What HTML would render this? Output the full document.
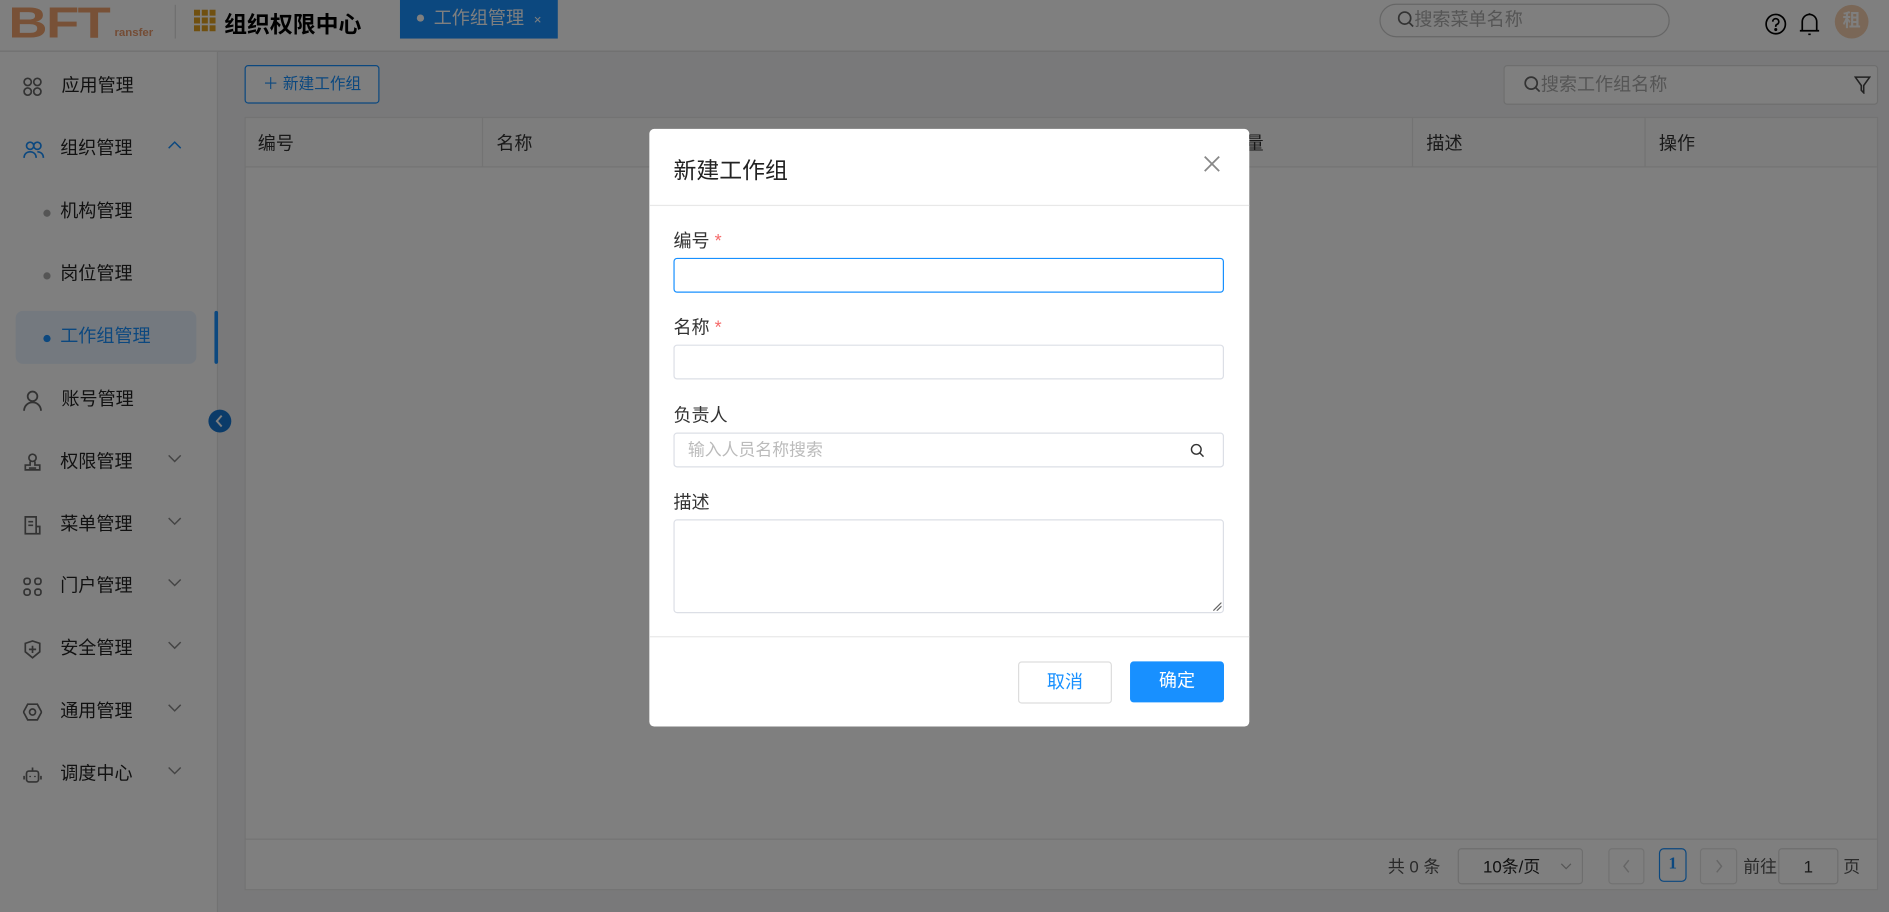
<!DOCTYPE html>
<html><head><meta charset="utf-8"><style>
*{box-sizing:border-box;margin:0;padding:0}
html,body{width:1889px;height:912px;overflow:hidden;background:#f2f3f5}
body{font-family:"Liberation Sans","Noto Sans CJK SC",sans-serif;color:#333}
#w{position:absolute;left:0;top:0;width:1568px;height:757px;transform:scale(1.20472,1.2048);transform-origin:0 0;background:#f2f3f5}
.a{position:absolute}
.hdr{left:0;top:0;width:1568px;height:43px;background:#fff;border-bottom:1px solid #ddd}
.side{left:0;top:43px;width:181px;height:714px;background:#fff;border-right:1px solid #e4e4e4}
.it{position:absolute;left:0;width:181px;height:20px;font-size:15px;color:#222;line-height:20px}
.it .t{position:absolute;left:50px;top:0}
.it .ic{position:absolute;left:19px;top:2px}
.it .ch{position:absolute;left:139px;top:3px}
.dot{position:absolute;left:36px;top:8px;width:6px;height:6px;border-radius:3px;background:#aaa}
.mask{left:0;top:0;width:1568px;height:757px;background:rgba(0,0,0,.5)}
.modal{left:539px;top:107px;width:498px;height:496px;background:#fff;border-radius:4px}
.lbl{position:absolute;left:20px;font-size:15px;color:#333}
.inp{position:absolute;left:20px;width:457px;height:29px;border:1px solid #dcdfe6;border-radius:3px}
.th{position:absolute;top:108px;font-size:15px;color:#333}
</style></head><body><div id="w">
<div class="a hdr">
 <div class="a" style="left:7px;top:1px;font:900 36px/36px 'Liberation Sans',sans-serif;color:#f0a36e;transform:scaleX(1.25);transform-origin:0 0;letter-spacing:-1px">BFT</div>
 <div class="a" style="left:95px;top:22px;font:bold 9.5px 'Liberation Sans',sans-serif;color:#e8986a">ransfer</div>
 <div class="a" style="left:145px;top:4px;width:1px;height:28px;background:#ddd"></div>
 <svg class="a" style="left:161px;top:8px" width="18" height="18" viewBox="0 0 18 18" fill="#e0a020"><rect x="0" y="0" width="5" height="5"/><rect x="6.5" y="0" width="5" height="5"/><rect x="13" y="0" width="5" height="5"/><rect x="0" y="6.5" width="5" height="5"/><rect x="6.5" y="6.5" width="5" height="5"/><rect x="13" y="6.5" width="5" height="5"/><rect x="0" y="13" width="5" height="5"/><rect x="6.5" y="13" width="5" height="5"/><rect x="13" y="13" width="5" height="5"/></svg>
 <div class="a" style="left:186px;top:6px;font-size:19px;font-weight:bold;color:#000">组织权限中心</div>
 <div class="a" style="left:332px;top:0;width:131px;height:32px;background:#1890ff;color:#fff;font-size:15px;line-height:31px"><span style="display:inline-block;width:6px;height:6px;border-radius:3px;background:#fff;margin:0 8px 2px 14px"></span>工作组管理<span style="font-size:11px;margin-left:8px">×</span></div>
 <div class="a" style="left:1145px;top:3px;width:241px;height:28px;border:1px solid #ccc;border-radius:14px;font-size:15px;color:#aaa;line-height:26px;padding-left:14px"><svg width="14" height="14" viewBox="0 0 14 14" style="vertical-align:-2px" fill="none" stroke="#666" stroke-width="1.4"><circle cx="6" cy="6" r="5"/><path d="M9.6 9.6L13 13"/></svg>搜索菜单名称</div>
 <svg class="a" style="left:1464px;top:10px" width="20" height="20" viewBox="0 0 20 20" fill="none" stroke="#000" stroke-width="1.4"><circle cx="10" cy="10" r="8"/><path d="M7.5 8a2.5 2.5 0 1 1 3.5 2.3c-.7.3-1 .8-1 1.5v.5"/><circle cx="10" cy="14.5" r=".6" fill="#000"/></svg>
 <svg class="a" style="left:1493px;top:9px" width="18" height="22" viewBox="0 0 18 22" fill="none" stroke="#000" stroke-width="1.4"><path d="M3 16V9a6 6 0 0 1 12 0v7M1 16.5h16M9 2V3M8 19.5h2"/></svg>
 <div class="a" style="left:1523px;top:4px;width:28px;height:28px;border-radius:14px;background:#f4cfae;color:#fff;font-size:15px;font-weight:bold;text-align:center;line-height:28px">租</div>
</div>
<div class="a side">
 <div class="it" style="top:19px"><svg class="ic" width="16" height="16" fill="none" stroke="#666" stroke-width="1.4"><circle cx="4" cy="4" r="3"/><circle cx="12" cy="4" r="3"/><circle cx="4" cy="12" r="3"/><circle cx="12" cy="12" r="3"/></svg><span class="t" style="left:51px">应用管理</span></div>
 <div class="it" style="top:71px"><svg class="ic" width="18" height="16" fill="none" stroke="#1890ff" stroke-width="1.4"><circle cx="6" cy="5" r="3"/><circle cx="12" cy="5" r="3"/><path d="M1 15c0-3 2-5 5-5s5 2 5 5M12 10c3 0 5 2 5 5"/></svg><span class="t">组织管理</span><svg class="ch" width="12" height="8" fill="none" stroke="#1890ff" stroke-width="1.2"><path d="M1 6L6 1l5 5"/></svg></div>
 <div class="it" style="top:123px"><span class="dot"></span><span class="t">机构管理</span></div>
 <div class="it" style="top:175px"><span class="dot"></span><span class="t">岗位管理</span></div>
 <div class="a" style="left:13px;top:215px;width:150px;height:44px;background:#e8f3ff;border-radius:6px"></div>
 <div class="a" style="left:178px;top:215px;width:3px;height:44px;background:#1890ff;border-radius:2px"></div>
 <div class="it" style="top:227px;color:#1890ff"><span class="dot" style="background:#1890ff"></span><span class="t">工作组管理</span></div>
 <div class="it" style="top:279px"><svg class="ic" width="16" height="17" fill="none" stroke="#666" stroke-width="1.5"><circle cx="8" cy="5" r="4"/><path d="M1 17c0-4 3-7 7-7s7 3 7 7"/></svg><span class="t" style="left:51px">账号管理</span></div>
 <div class="it" style="top:331px"><svg class="ic" width="16" height="16" fill="none" stroke="#666" stroke-width="1.4"><circle cx="8" cy="4" r="3"/><path d="M6 7v3H2v4h12v-4h-4V7M5 12.5h6"/></svg><span class="t">权限管理</span><svg class="ch" width="12" height="8" fill="none" stroke="#888" stroke-width="1.2"><path d="M1 1l5 5 5-5"/></svg></div>
 <div class="it" style="top:383px"><svg class="ic" width="16" height="16" fill="none" stroke="#666" stroke-width="1.4"><path d="M11 15H2V1h9v14h3V9h-3M4.5 5h4M4.5 8h4"/></svg><span class="t">菜单管理</span><svg class="ch" width="12" height="8" fill="none" stroke="#888" stroke-width="1.2"><path d="M1 1l5 5 5-5"/></svg></div>
 <div class="it" style="top:434px"><svg class="ic" width="16" height="16" fill="none" stroke="#666" stroke-width="1.4"><rect x="1" y="1" width="5" height="5" rx="2"/><rect x="10" y="1" width="5" height="5" rx="2"/><rect x="1" y="10" width="5" height="5" rx="2"/><rect x="10" y="10" width="5" height="5" rx="2"/></svg><span class="t">门户管理</span><svg class="ch" width="12" height="8" fill="none" stroke="#888" stroke-width="1.2"><path d="M1 1l5 5 5-5"/></svg></div>
 <div class="it" style="top:486px"><svg class="ic" width="16" height="17" fill="none" stroke="#666" stroke-width="1.4"><path d="M2 3l6-2 6 2v7l-6 5-6-5z"/><path d="M8 5v6M5 8h6"/></svg><span class="t">安全管理</span><svg class="ch" width="12" height="8" fill="none" stroke="#888" stroke-width="1.2"><path d="M1 1l5 5 5-5"/></svg></div>
 <div class="it" style="top:538px"><svg class="ic" width="16" height="16" fill="none" stroke="#666" stroke-width="1.4"><path d="M4 1.5h8l3.5 6.5-3.5 6.5H4L.5 8z"/><circle cx="8" cy="8" r="2.5"/></svg><span class="t">通用管理</span><svg class="ch" width="12" height="8" fill="none" stroke="#888" stroke-width="1.2"><path d="M1 1l5 5 5-5"/></svg></div>
 <div class="it" style="top:590px"><svg class="ic" width="16" height="16" fill="none" stroke="#666" stroke-width="1.4"><rect x="3" y="5" width="10" height="9" rx="2"/><path d="M8 5V2M1 9v3M15 9v3M6 9v1M10 9v1"/></svg><span class="t">调度中心</span><svg class="ch" width="12" height="8" fill="none" stroke="#888" stroke-width="1.2"><path d="M1 1l5 5 5-5"/></svg></div>
</div>
<div class="a" style="left:173px;top:340px;width:19px;height:19px;border-radius:10px;background:#1677d2"><svg width="19" height="19" fill="none" stroke="#fff" stroke-width="1.6"><path d="M11 5l-4 4.5 4 4.5"/></svg></div>
<div class="a" style="left:203px;top:54px;width:112px;height:32px;border:1px solid #1890ff;border-radius:3px;background:#fff;color:#1890ff;font-size:13px;line-height:30px;text-align:center">＋ 新建工作组</div>
<div class="a" style="left:1248px;top:54px;width:311px;height:33px;border:1px solid #ddd;border-radius:3px;background:#fff;font-size:15px;color:#aaa;line-height:31px;padding-left:16px"><svg width="14" height="14" viewBox="0 0 14 14" style="vertical-align:-2px" fill="none" stroke="#666" stroke-width="1.4"><circle cx="6" cy="6" r="5"/><path d="M9.6 9.6L13 13"/></svg>搜索工作组名称<svg class="a" style="left:290px;top:8px" width="14" height="15" fill="none" stroke="#444" stroke-width="1.3"><path d="M1 1h12L8 8v6L6 12V8z"/></svg></div>
<div class="a" style="left:203px;top:97px;width:1356px;height:642px;background:#fff;border:1px solid #e6e6e6"></div>
<div class="a" style="left:203px;top:97px;width:1356px;height:42px;background:#fafafa;border:1px solid #e6e6e6"></div>
<div class="a" style="left:400px;top:97px;width:1px;height:42px;background:#e6e6e6"></div>
<div class="a" style="left:1172px;top:97px;width:1px;height:42px;background:#e6e6e6"></div>
<div class="a" style="left:1365px;top:97px;width:1px;height:42px;background:#e6e6e6"></div>
<div class="th" style="left:214px">编号</div><div class="th" style="left:412px">名称</div><div class="th" style="left:1034px">量</div><div class="th" style="left:1184px">描述</div><div class="th" style="left:1377px">操作</div>
<div class="a" style="left:203px;top:696px;width:1356px;height:1px;background:#e6e6e6"></div>
<div class="a" style="left:1152px;top:709px;font-size:14px;color:#555">共 0 条</div>
<div class="a" style="left:1210px;top:704px;width:104px;height:30px;border:1px solid #ddd;border-radius:3px;font-size:14px;line-height:28px;padding-left:20px;color:#222">10条/页<svg class="a" style="left:84px;top:11px" width="10" height="6" fill="none" stroke="#aaa"><path d="M1 1l4 4 4-4"/></svg></div>
<div class="a" style="left:1335px;top:704px;width:30px;height:30px;border:1px solid #e4e4e4;border-radius:3px"><svg width="28" height="28" fill="none" stroke="#ccc" stroke-width="1.2"><path d="M16 9l-4 5 4 5"/></svg></div>
<div class="a" style="left:1377px;top:704px;width:23px;height:28px;border:1px solid #1890ff;border-radius:4px;color:#1890ff;font-weight:bold;font-size:14px;text-align:center;line-height:26px;font-family:'Liberation Serif',serif">1</div>
<div class="a" style="left:1411px;top:704px;width:31px;height:30px;border:1px solid #e4e4e4;border-radius:3px"><svg width="29" height="28" fill="none" stroke="#ccc" stroke-width="1.2"><path d="M13 9l4 5-4 5"/></svg></div>
<div class="a" style="left:1447px;top:709px;font-size:14px;color:#555">前往</div>
<div class="a" style="left:1476px;top:704px;width:50px;height:30px;border:1px solid #ddd;border-radius:3px;text-align:center;font-size:14px;line-height:28px">1</div>
<div class="a" style="left:1530px;top:709px;font-size:14px;color:#555">页</div>
<div class="a mask"></div>
<div class="a modal">
 <div class="a" style="left:20px;top:20px;font-size:19px;color:#222">新建工作组</div>
 <svg class="a" style="left:460px;top:22px" width="14" height="14" fill="none" stroke="#888" stroke-width="1.5"><path d="M1 1l12 12M13 1L1 13"/></svg>
 <div class="a" style="left:0;top:63px;width:498px;height:1px;background:#e8e8e8"></div>
 <div class="lbl" style="top:82px">编号 <span style="color:#f56c6c">*</span></div>
 <div class="inp" style="top:107px;border-color:#1890ff"></div>
 <div class="lbl" style="top:154px">名称 <span style="color:#f56c6c">*</span></div>
 <div class="inp" style="top:179px"></div>
 <div class="lbl" style="top:227px">负责人</div>
 <div class="inp" style="top:252px;font-size:14px;color:#bbb;line-height:27px;padding-left:11px">输入人员名称搜索<svg class="a" style="left:428px;top:8px" width="12" height="12" fill="none" stroke="#333" stroke-width="1.2"><circle cx="5" cy="5" r="4"/><path d="M8 8l3 3"/></svg></div>
 <div class="lbl" style="top:299px">描述</div>
 <div class="inp" style="top:324px;height:78px"><svg class="a" style="right:1px;bottom:1px" width="7" height="7" stroke="#666"><path d="M0 7L7 0M3 7l4-4"/></svg></div>
 <div class="a" style="left:0;top:421px;width:498px;height:1px;background:#e8e8e8"></div>
 <div class="a" style="left:306px;top:442px;width:78px;height:35px;border:1px solid #ddd;border-radius:3px;color:#1890ff;font-size:15px;text-align:center;line-height:33px">取消</div>
 <div class="a" style="left:399px;top:442px;width:78px;height:34px;background:#1890ff;border-radius:3px;color:#fff;font-size:15px;text-align:center;line-height:34px">确定</div>
</div>
</div></body></html>
